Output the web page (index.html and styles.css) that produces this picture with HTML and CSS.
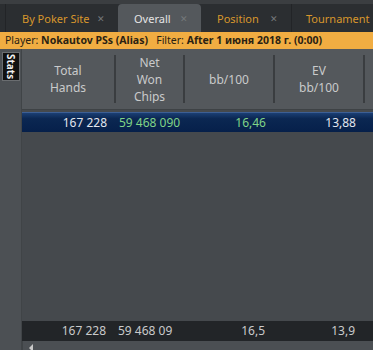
FILE: index.html
```html
<!DOCTYPE html>
<html lang="en">
<head>
  <meta charset="UTF-8" />
  <title>Stats</title>
  <link rel="stylesheet" href="styles.css">
</head>
<body>

<div class="tabs">
  <div class="tab">By Poker Site <span class="x">&#x2715;</span></div>
  <div class="tab active">Overall <span class="x">&#x2715;</span></div>
  <div class="tab">Position <span class="x">&#x2715;</span></div>
  <div class="tab last">Tournament R</div>
</div>

<div class="filter">
  Player: <b>Nokautov PSs (Alias)</b>&nbsp;&nbsp; Filter: <b>After 1 июня 2018 г. (0:00)</b>
</div>

<div class="main">
  <div class="side">
    <div class="stats-tab">Stats</div>
  </div>

  <div class="grid">
    <div class="row head">
      <div class="cell c1">Total<br>Hands</div>
      <div class="cell c2">Net<br>Won<br>Chips</div>
      <div class="cell c3">bb/100</div>
      <div class="cell c4">EV<br>bb/100</div>
      <div class="cell c5"></div>
    </div>

    <div class="row selected">
      <div class="cell c1">167 228</div>
      <div class="cell c2 green clip">59 468 090</div>
      <div class="cell c3 green">16,46</div>
      <div class="cell c4">13,88</div>
      <div class="cell c5"></div>
    </div>

    <div class="body"></div>

    <div class="row total">
      <div class="cell c1">167 228</div>
      <div class="cell c2 clip">59 468 09</div>
      <div class="cell c3">16,5</div>
      <div class="cell c4">13,9</div>
      <div class="cell c5"></div>
    </div>

    <div class="scroll">
      <span class="arrow"></span>
    </div>
  </div>
</div>

</body>
</html>
```

FILE: styles.css
```css
* {
    margin: 0;
    padding: 0;
    box-sizing: border-box;
}

body {
    width: 373px;
    height: 350px;
    overflow: hidden;
    background: #45494d;
    font-family: "Noto Sans", "Open Sans", sans-serif;
    display: flex;
    flex-direction: column;
}

/* tabs */
.tabs {
    height: 32px;
    background: #2b2e31;
    border-top: 4px solid #3b3e41;
    display: flex;
    align-items: stretch;
    padding-left: 5px;
    white-space: nowrap;
    overflow: hidden;
}

.tab {
    flex-shrink: 0;
    display: flex;
    align-items: center;
    padding: 0 0 0 16px;
    width: 113px;
    font-size: 11px;
    color: #d8972c;
    border-left: 1px solid #222427;
}

.tab .x {
    color: #75787b;
    font-size: 9px;
    margin-left: auto;
    margin-right: 13px;
}

.tab.active {
    width: 83px;
    background: #54585c;
    color: #e4e4e4;
    border-radius: 4px 4px 0 0;
    border-left: none;
}

.tab.active + .tab {
    border-left: none;
    width: 90px;
}

.tab.last {
    flex: 1;
    flex-shrink: 1;
    padding-left: 14px;
    overflow: hidden;
}

/* filter bar */
.filter {
    height: 17px;
    background: #f1ad42;
    color: #2a2213;
    font-size: 10.5px;
    line-height: 17px;
    padding-left: 5px;
    white-space: nowrap;
    overflow: hidden;
}

.filter b {
    font-weight: 700;
}

/* main area */
.main {
    flex: 1;
    display: flex;
}

.side {
    width: 22px;
    background: #4c5054;
    border-right: 1px solid #404447;
    padding: 3px 0 0 2px;
}

.stats-tab {
    writing-mode: vertical-rl;
    background: #111;
    color: #f0f0f0;
    font-size: 10px;
    font-weight: 700;
    width: 18px;
    height: 29px;
    display: flex;
    align-items: center;
    justify-content: center;
    border: 1px solid #6a6d70;
}

.grid {
    flex: 1;
    display: flex;
    flex-direction: column;
    overflow: hidden;
}

.row {
    display: flex;
    white-space: nowrap;
}

.cell {
    flex-shrink: 0;
    font-size: 12px;
    text-align: right;
    padding-right: 9px;
    overflow: hidden;
}

.c1 { width: 94px; }
.c2 { width: 69px; }
.c3 { width: 90px; }
.c4 { width: 90px; }
.c5 { flex: 1; flex-shrink: 1; }

.head {
    height: 61px;
    background: #54585c;
    border-bottom: 1px solid #3e4245;
    align-items: center;
}

.head .cell {
    text-align: center;
    padding: 0;
    color: #c9cacb;
    line-height: 17px;
    border-right: 2px solid #3a3d40;
    height: 48px;
    display: flex;
    align-items: center;
    justify-content: center;
}

.head .c5 {
    border-right: none;
}

.selected {
    margin-top: 2px;
    height: 20px;
    line-height: 20px;
    background: linear-gradient(#1b3f74, #0b2752 30%, #06204a);
    border-top: 1px solid #3d5f94;
    color: #e2e6ee;
}

.clip {
    text-align: left;
    padding: 0 0 0 3px;
}

.green {
    color: #80d487;
}

.body {
    flex: 1;
    background: #45494d;
}

.total {
    height: 20px;
    line-height: 20px;
    background: #222528;
    color: #c9cacb;
}

.total .cell {
    padding-right: 10px;
}

.total .clip {
    padding: 0 0 0 2px;
}

.scroll {
    height: 9px;
    background: #4b4f53;
    border-left: 1px solid #3f4346;
    position: relative;
}

.arrow {
    position: absolute;
    left: 6px;
    top: 3px;
    width: 0;
    height: 0;
    border-right: 4px solid #c8c8c8;
    border-top: 4px solid transparent;
    border-bottom: 4px solid transparent;
}
```
